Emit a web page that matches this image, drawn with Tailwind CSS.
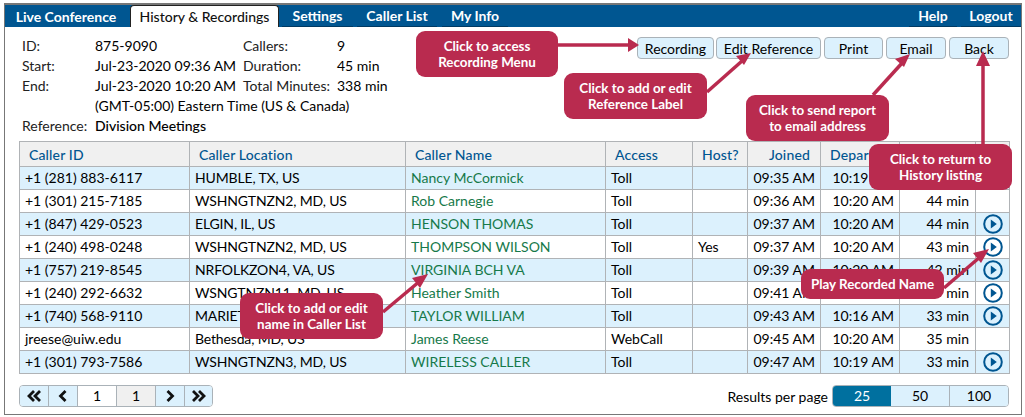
<!DOCTYPE html>
<html lang="en">
<head>
  <meta charset="UTF-8" />
  <title>History & Recordings</title>
  <script src="https://cdn.jsdelivr.net/npm/@tailwindcss/browser@4"></script>
</head>
<body class="bg-white font-['Lato',sans-serif] text-[14px] text-black overflow-hidden">
  <div class="relative h-[417px] w-[1025px] pl-1 pt-[3px]">
    <!-- frame -->
    <div class="h-[412px] w-[1018px] border-x border-b border-t-2 border-[#777]">
      <!-- nav -->
      <nav class="flex h-[22px] items-end bg-[#005691] text-[14px] font-bold text-white">
        <a class="flex h-[21px] w-[122px] items-center justify-center">Live Conference</a>
        <a class="ml-[3px] flex h-[22px] w-[149px] items-center justify-center rounded-t-[4px] border-x border-t border-[#222] bg-white font-medium text-[#111]">History &amp; Recordings</a>
        <a class="ml-[3px] flex h-[22px] w-[71px] items-center justify-center border-b border-[#003a63]">Settings</a>
        <a class="ml-[4px] flex h-[22px] w-[80px] items-center justify-center border-b border-[#003a63]">Caller List</a>
        <a class="ml-[5px] flex h-[22px] w-[66px] items-center justify-center border-b border-[#003a63]">My Info</a>
        <a class="ml-auto flex h-[22px] w-[48px] items-center justify-center border-b border-[#003a63]">Help</a>
        <a class="ml-[4px] flex h-[22px] w-[60px] items-center justify-center border-b border-[#003a63]">Logout</a>
      </nav>

      <!-- summary -->
      <div class="flex h-[114px] items-start">
        <dl class="ml-[17px] mt-[9px] grid grid-cols-[73px_148px_94px_80px] auto-rows-[20px] items-center leading-[20px]">
          <dt class="text-[#222]">ID:</dt><dd>875-9090</dd><dt class="text-[#222]">Callers:</dt><dd>9</dd>
          <dt class="text-[#222]">Start:</dt><dd>Jul-23-2020 09:36 AM</dd><dt class="text-[#222]">Duration:</dt><dd>45 min</dd>
          <dt class="text-[#222]">End:</dt><dd>Jul-23-2020 10:20 AM</dd><dt class="text-[#222]">Total Minutes:</dt><dd>338 min</dd>
          <dt></dt><dd class="col-span-3">(GMT-05:00) Eastern Time (US &amp; Canada)</dd>
          <dt class="text-[#222]">Reference:</dt><dd class="col-span-3 font-medium">Division Meetings</dd>
        </dl>
        <div class="ml-auto mr-[12px] mt-[10px] flex gap-[2px]">
          <button class="h-[22px] w-[77px] rounded-[4px] border border-[#aab2b8] bg-[#dcf1fd]">Recording</button>
          <button class="h-[22px] w-[105px] rounded-[4px] border border-[#aab2b8] bg-[#dcf1fd]">Edit Reference</button>
          <button class="ml-px h-[22px] w-[59px] rounded-[4px] border border-[#aab2b8] bg-[#dcf1fd]">Print</button>
          <button class="ml-px h-[22px] w-[60px] rounded-[4px] border border-[#aab2b8] bg-[#dcf1fd]">Email</button>
          <button class="ml-px h-[22px] w-[60px] rounded-[4px] border border-[#aab2b8] bg-[#dcf1fd]">Back</button>
        </div>
      </div>

      <!-- callers -->
      <table class="ml-[14px] w-[990px] table-fixed border-collapse">
        <colgroup>
          <col class="w-[170px]" /><col class="w-[216px]" /><col class="w-[200px]" /><col class="w-[87px]" /><col class="w-[55px]" /><col class="w-[73px]" /><col class="w-[79px]" /><col class="w-[76px]" /><col class="w-[34px]" />
        </colgroup>
        <thead>
          <tr class="h-[25px] bg-[#f0f0f0] tracking-[0.15px] text-[#005691] [&>th]:border [&>th]:border-[#b0b3b6] [&>th]:font-medium">
            <th class="pl-[9px] text-left">Caller ID</th>
            <th class="pl-[9px] text-left">Caller Location</th>
            <th class="pl-[9px] text-left">Caller Name</th>
            <th class="pl-[9px] text-left">Access</th>
            <th class="pl-[9px] text-left">Host?</th>
            <th class="pr-[10px] text-right">Joined</th>
            <th class="pl-[9px] text-left">Departed</th>
            <th class="pr-[6px] text-right">Minutes</th>
            <th></th>
          </tr>
        </thead>
        <tbody class="[&_td]:border [&_td]:border-[#b0b3b6] [&_td]:p-0 [&_td]:leading-[22px] [&_td:nth-child(2)]:tracking-[-0.15px] [&>tr]:h-[23px] [&>tr:nth-child(odd)]:bg-[#dcf1fd]">
          <tr>
            <td class="pl-[5px]!">+1 (281) 883-6117</td><td class="pl-[5px]!">HUMBLE, TX, US</td><td class="pl-[5px]! text-[#16794a]">Nancy McCormick</td><td class="pl-[5px]!">Toll</td><td></td><td class="pr-[5px]! text-right">09:35 AM</td><td class="pr-[5px]! text-right">10:19 AM</td><td class="pr-[6px]! text-right">44 min</td><td></td>
          </tr>
          <tr>
            <td class="pl-[5px]!">+1 (301) 215-7185</td><td class="pl-[5px]!">WSHNGTNZN2, MD, US</td><td class="pl-[5px]! text-[#16794a]">Rob Carnegie</td><td class="pl-[5px]!">Toll</td><td></td><td class="pr-[5px]! text-right">09:36 AM</td><td class="pr-[5px]! text-right">10:20 AM</td><td class="pr-[6px]! text-right">44 min</td><td></td>
          </tr>
          <tr>
            <td class="pl-[5px]!">+1 (847) 429-0523</td><td class="pl-[5px]!">ELGIN, IL, US</td><td class="pl-[5px]! text-[#16794a]">HENSON THOMAS</td><td class="pl-[5px]!">Toll</td><td></td><td class="pr-[5px]! text-right">09:37 AM</td><td class="pr-[5px]! text-right">10:20 AM</td><td class="pr-[6px]! text-right">44 min</td>
            <td><svg class="mx-auto block size-[20px]" viewBox="0 0 20 20"><circle cx="10" cy="10" r="8.8" fill="none" stroke="#005691" stroke-width="2"/><path d="M7.8 5.5l6 4.5-6 4.5z" fill="#005691"/></svg></td>
          </tr>
          <tr>
            <td class="pl-[5px]!">+1 (240) 498-0248</td><td class="pl-[5px]!">WSHNGTNZN2, MD, US</td><td class="pl-[5px]! text-[#16794a]">THOMPSON WILSON</td><td class="pl-[5px]!">Toll</td><td class="pl-[5px]!">Yes</td><td class="pr-[5px]! text-right">09:37 AM</td><td class="pr-[5px]! text-right">10:20 AM</td><td class="pr-[6px]! text-right">43 min</td>
            <td><svg class="mx-auto block size-[20px]" viewBox="0 0 20 20"><circle cx="10" cy="10" r="8.8" fill="none" stroke="#005691" stroke-width="2"/><path d="M7.8 5.5l6 4.5-6 4.5z" fill="#005691"/></svg></td>
          </tr>
          <tr>
            <td class="pl-[5px]!">+1 (757) 219-8545</td><td class="pl-[5px]!">NRFOLKZON4, VA, US</td><td class="pl-[5px]! text-[#16794a]">VIRGINIA BCH VA</td><td class="pl-[5px]!">Toll</td><td></td><td class="pr-[5px]! text-right">09:39 AM</td><td class="pr-[5px]! text-right">10:20 AM</td><td class="pr-[6px]! text-right">42 min</td>
            <td><svg class="mx-auto block size-[20px]" viewBox="0 0 20 20"><circle cx="10" cy="10" r="8.8" fill="none" stroke="#005691" stroke-width="2"/><path d="M7.8 5.5l6 4.5-6 4.5z" fill="#005691"/></svg></td>
          </tr>
          <tr>
            <td class="pl-[5px]!">+1 (240) 292-6632</td><td class="pl-[5px]!">WSNGTNZN11, MD, US</td><td class="pl-[5px]! text-[#16794a]">Heather Smith</td><td class="pl-[5px]!">Toll</td><td></td><td class="pr-[5px]! text-right">09:41 AM</td><td class="pr-[5px]! text-right">10:20 AM</td><td class="pr-[6px]! text-right">39 min</td>
            <td><svg class="mx-auto block size-[20px]" viewBox="0 0 20 20"><circle cx="10" cy="10" r="8.8" fill="none" stroke="#005691" stroke-width="2"/><path d="M7.8 5.5l6 4.5-6 4.5z" fill="#005691"/></svg></td>
          </tr>
          <tr>
            <td class="pl-[5px]!">+1 (740) 568-9110</td><td class="pl-[5px]!">MARIETTA, OH, US</td><td class="pl-[5px]! text-[#16794a]">TAYLOR WILLIAM</td><td class="pl-[5px]!">Toll</td><td></td><td class="pr-[5px]! text-right">09:43 AM</td><td class="pr-[5px]! text-right">10:16 AM</td><td class="pr-[6px]! text-right">33 min</td>
            <td><svg class="mx-auto block size-[20px]" viewBox="0 0 20 20"><circle cx="10" cy="10" r="8.8" fill="none" stroke="#005691" stroke-width="2"/><path d="M7.8 5.5l6 4.5-6 4.5z" fill="#005691"/></svg></td>
          </tr>
          <tr>
            <td class="pl-[5px]!">jreese@uiw.edu</td><td class="pl-[5px]!">Bethesda, MD, US</td><td class="pl-[5px]! text-[#16794a]">James Reese</td><td class="pl-[5px]!">WebCall</td><td></td><td class="pr-[5px]! text-right">09:45 AM</td><td class="pr-[5px]! text-right">10:20 AM</td><td class="pr-[6px]! text-right">35 min</td><td></td>
          </tr>
          <tr>
            <td class="pl-[5px]!">+1 (301) 793-7586</td><td class="pl-[5px]!">WSHNGTNZN3, MD, US</td><td class="pl-[5px]! text-[#16794a]">WIRELESS CALLER</td><td class="pl-[5px]!">Toll</td><td></td><td class="pr-[5px]! text-right">09:47 AM</td><td class="pr-[5px]! text-right">10:19 AM</td><td class="pr-[6px]! text-right">33 min</td>
            <td><svg class="mx-auto block size-[20px]" viewBox="0 0 20 20"><circle cx="10" cy="10" r="8.8" fill="none" stroke="#005691" stroke-width="2"/><path d="M7.8 5.5l6 4.5-6 4.5z" fill="#005691"/></svg></td>
          </tr>
        </tbody>
      </table>

      <!-- pager -->
      <div class="ml-[14px] mr-[12px] mt-[11px] flex h-[22px] items-center">
        <div class="flex h-full overflow-hidden rounded-[4px] border border-[#aab2b8] text-center">
          <span class="flex w-[29px] items-center justify-center border-r border-[#aab2b8] bg-[#dcf1fd]"><svg class="size-[16px]" viewBox="0 0 16 16" fill="none" stroke="#111" stroke-width="2.8"><path d="M8 3L3 8l5 5M14 3L9 8l5 5"/></svg></span>
          <span class="flex w-[29px] items-center justify-center border-r border-[#aab2b8] bg-[#dcf1fd]"><svg class="size-[16px]" viewBox="0 0 16 16" fill="none" stroke="#111" stroke-width="2.8"><path d="M10.5 3L5.5 8l5 5"/></svg></span>
          <span class="w-[39px] border-r border-[#aab2b8] bg-white leading-[20px]">1</span>
          <span class="w-[39px] border-r border-[#aab2b8] bg-[#f0f0f0] leading-[20px]">1</span>
          <span class="flex w-[29px] items-center justify-center border-r border-[#aab2b8] bg-[#dcf1fd]"><svg class="size-[16px]" viewBox="0 0 16 16" fill="none" stroke="#111" stroke-width="2.8"><path d="M5.5 3l5 5-5 5"/></svg></span>
          <span class="flex w-[27px] items-center justify-center bg-[#dcf1fd]"><svg class="size-[16px]" viewBox="0 0 16 16" fill="none" stroke="#111" stroke-width="2.8"><path d="M2 3l5 5-5 5M8 3l5 5-5 5"/></svg></span>
        </div>
        <span class="ml-auto mr-[4px]">Results per page</span>
        <div class="flex h-full w-[177px] overflow-hidden rounded-[4px] border border-[#aab2b8] text-center leading-[20px]">
          <span class="w-[58px] bg-[#00709f] text-white">25</span>
          <span class="w-[59px] border-r border-[#aab2b8] bg-[#dcf1fd]">50</span>
          <span class="flex-1 bg-[#dcf1fd]">100</span>
        </div>
      </div>
    </div>

    <!-- arrows overlay -->
    <svg class="pointer-events-none absolute left-0 top-0" width="1025" height="417" fill="none" stroke="#b92b4f" stroke-width="3.5">
      <path d="M558 45H630"/><path d="M628 38l11 7-11 7z" fill="#b92b4f" stroke="none"/>
      <path d="M707 92L742 61"/><path d="M751 53l-15 3 8 9z" fill="#b92b4f" stroke="none"/>
      <path d="M873 95L903 62"/><path d="M910 54l-15 5 9 8z" fill="#b92b4f" stroke="none"/>
      <path d="M983 144V62"/><path d="M983 51l-7 15h14z" fill="#b92b4f" stroke="none"/>
      <path d="M944 288L980 257"/><path d="M989 249l-16 4 8 10z" fill="#b92b4f" stroke="none"/>
      <path d="M383 312L420 281"/><path d="M428 274l-16 4 8 10z" fill="#b92b4f" stroke="none"/>
    </svg>

    <!-- callouts -->
    <div class="absolute left-[416px] top-[31px] flex h-[46px] w-[142px] items-center justify-center rounded-[9px] bg-[#b92b4f] text-center text-[13.4px] font-bold leading-[16px] text-white">Click to access<br />Recording Menu</div>
    <div class="absolute left-[564px] top-[73px] flex h-[46px] w-[143px] items-center justify-center rounded-[9px] bg-[#b92b4f] text-center text-[13.4px] font-bold leading-[16px] text-white">Click to add or edit<br />Reference Label</div>
    <div class="absolute left-[746px] top-[95px] flex h-[46px] w-[143px] items-center justify-center rounded-[9px] bg-[#b92b4f] text-center text-[13.4px] font-bold leading-[16px] text-white">Click to send report<br />to email address</div>
    <div class="absolute left-[869px] top-[144px] flex h-[46px] w-[143px] items-center justify-center rounded-[9px] bg-[#b92b4f] text-center text-[13.4px] font-bold leading-[16px] text-white">Click to return to<br />History listing</div>
    <div class="absolute left-[801px] top-[269px] flex h-[30px] w-[143px] items-center justify-center rounded-[9px] bg-[#b92b4f] text-center text-[13.4px] font-bold leading-[16px] text-white">Play Recorded Name</div>
    <div class="absolute left-[240px] top-[293px] flex h-[46px] w-[143px] items-center justify-center rounded-[9px] bg-[#b92b4f] text-center text-[13.4px] font-bold leading-[16px] text-white">Click to add or edit<br />name in Caller List</div>
  </div>
</body>
</html>
